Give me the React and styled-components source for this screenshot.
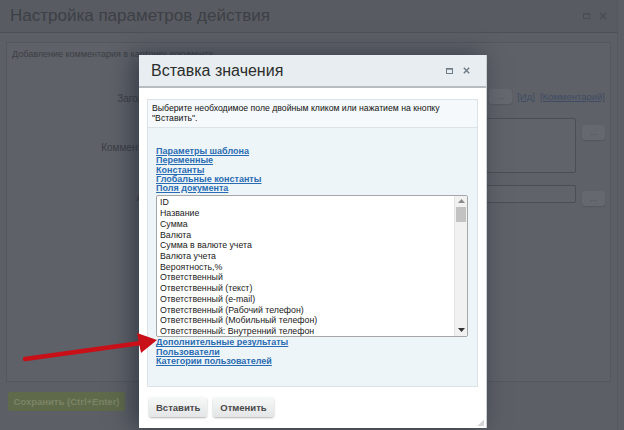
import React from "react";
import styled, { createGlobalStyle } from "styled-components";

const GlobalStyle = createGlobalStyle`
  html, body {
    margin: 0;
    padding: 0;
    background: #5b5e64;
  }
  body {
    font-family: "Liberation Sans", Arial, sans-serif;
  }
`;

const fields = [
  "ID",
  "Название",
  "Сумма",
  "Валюта",
  "Сумма в валюте учета",
  "Валюта учета",
  "Вероятность,%",
  "Ответственный",
  "Ответственный (текст)",
  "Ответственный (e-mail)",
  "Ответственный (Рабочий телефон)",
  "Ответственный (Мобильный телефон)",
  "Ответственный: Внутренний телефон",
  "Ответственный: Должность",
];

const topLinks = [
  "Параметры шаблона",
  "Переменные",
  "Константы",
  "Глобальные константы",
  "Поля документа",
];

const bottomLinks = [
  "Дополнительные результаты",
  "Пользователи",
  "Категории пользователей",
];

const Page = styled.div`
  position: relative;
  width: 624px;
  height: 430px;
  overflow: hidden;
  background: #5b5e64;
  display: flex;
  flex-direction: column;
`;

/* ---------- dimmed dialog behind ---------- */

const BgDialog = styled.div`
  flex: 1;
  display: flex;
  flex-direction: column;
  margin-right: 6px;
  background: #5c5f65;
  border-right: 1px solid #55585e;
`;

const BgHeader = styled.div`
  height: 32px;
  display: flex;
  align-items: center;
  padding: 0 10px;
  border-bottom: 1px solid #4d5056;
  background: #585b61;
`;

const BgTitle = styled.div`
  flex: 1;
  font-size: 17px;
  color: #3d4046;
`;

const BgIcons = styled.div`
  display: flex;
  gap: 9px;
  align-items: center;
`;

const BgBody = styled.div`
  flex: 1;
  padding: 9px 6px 8px 6px;
  display: flex;
  flex-direction: column;
`;

const BgPanel = styled.div`
  height: 340px;
  border: 1px solid #54575d;
  background: #5e6167;
  padding: 6px 5px;
  box-sizing: border-box;
`;

const BgCaption = styled.div`
  font-size: 9px;
  color: #3c3f45;
  margin-bottom: 30px;
`;

const BgRow = styled.div`
  display: flex;
  align-items: flex-start;
  gap: 6px;
  margin-bottom: ${(p) => p.$gap || 10}px;
`;

const BgLabel = styled.div`
  width: 155px;
  flex: none;
  font-size: 10px;
  color: #3c3f45;
  text-align: right;
  padding-top: ${(p) => p.$top || 4}px;
`;

const BgField = styled.div`
  width: ${(p) => p.$w}px;
  height: ${(p) => p.$h}px;
  margin-left: 2px;
  border: 1px solid #4b4e54;
  border-radius: 2px;
  background: #606369;
  box-sizing: border-box;
`;

const BgSide = styled.div`
  display: flex;
  align-items: center;
  gap: 5px;
  padding-top: ${(p) => p.$top || 0}px;
`;

const BgDots = styled.div`
  width: 23px;
  height: 15px;
  border-radius: 3px;
  background: #65686e;
  color: #4a4d53;
  font-size: 8px;
  display: flex;
  align-items: center;
  justify-content: center;
  box-shadow: 0 1px 1px #55585e;
`;

const BgLink = styled.span`
  font-size: 9.5px;
  color: #3f4b63;
  text-decoration: underline;
`;

const BgFooter = styled.div`
  height: 40px;
  display: flex;
  align-items: flex-start;
  padding: 2px 8px;
`;

const BgSave = styled.div`
  width: 117px;
  height: 19px;
  border-radius: 2px;
  background: #5f6a4b;
  color: #7b8465;
  font-size: 9.5px;
  font-weight: bold;
  display: flex;
  align-items: center;
  justify-content: center;
`;

const BottomStrip = styled.div`
  height: 7px;
  background: #3e4147;
`;

/* ---------- insert value dialog ---------- */

const Modal = styled.div`
  position: absolute;
  left: 139px;
  top: 55px;
  width: 348px;
  height: 373px;
  background: #ffffff;
  box-shadow: -6px 0 22px rgba(20, 30, 45, 0.55);
  display: flex;
  flex-direction: column;
  border-right: 1px solid #c9cfd3;
  box-sizing: border-box;
`;

const ModalHeader = styled.div`
  height: 33px;
  flex: none;
  display: flex;
  align-items: center;
  padding: 0 12px;
  background: #e7edf0;
  border-bottom: 2px solid #b5bdc3;
  box-sizing: border-box;
`;

const ModalTitle = styled.div`
  flex: 1;
  font-size: 16px;
  color: #2d2d2d;
  padding-top: 1px;
`;

const HeaderIcons = styled.div`
  display: flex;
  align-items: center;
  gap: 10px;
  margin-right: 4px;
`;

const ModalBody = styled.div`
  flex: 1;
  padding: 11px 8px 0 8px;
  display: flex;
  flex-direction: column;
`;

const ContentBox = styled.div`
  height: 288px;
  border: 1px solid #dbe3e8;
  display: flex;
  flex-direction: column;
  box-sizing: border-box;
`;

const Hint = styled.div`
  background: #f6f9fb;
  border-bottom: 1px solid #dce4e9;
  padding: 3px 4px 4px 4px;
  font-size: 8.7px;
  line-height: 10px;
  color: #111;
`;

const Fields = styled.div`
  flex: 1;
  background: #eef5f9;
  padding: 19px 9px 0 8px;
`;

const LinkList = styled.div`
  display: flex;
  flex-direction: column;
`;

const FieldLink = styled.a`
  font-size: 9px;
  line-height: 9.3px;
  font-weight: bold;
  color: #2a6cb3;
  text-decoration: underline;
  cursor: pointer;
`;

const ListBox = styled.div`
  height: 142px;
  margin: 2px 0 1px 0;
  background: #fff;
  border: 1px solid #a6a6a6;
  border-radius: 2px;
  display: flex;
  overflow: hidden;
  box-sizing: border-box;
`;

const Options = styled.div`
  flex: 1;
  overflow: hidden;
  padding: 1px 3px;
`;

const Option = styled.div`
  font-size: 8.8px;
  line-height: 10.7px;
  color: #1a1a1a;
  white-space: nowrap;
`;

const Scrollbar = styled.div`
  width: 13px;
  flex: none;
  background: #f1f1f1;
  border-left: 1px solid #e4e4e4;
  display: flex;
  flex-direction: column;
  align-items: center;
  padding: 3px 0 4px 0;
  box-sizing: border-box;
`;

const Thumb = styled.div`
  width: 10px;
  height: 15px;
  margin-top: 4px;
  background: #c2c2c2;
`;

const Spacer = styled.div`
  flex: 1;
`;

const Footer = styled.div`
  display: flex;
  gap: 6px;
  padding: 10px 2px 0 2px;
`;

const Button = styled.button`
  height: 20px;
  padding: 0 7px;
  border: none;
  border-radius: 3px;
  background: linear-gradient(#f7f8f8, #e3e5e6);
  box-shadow: 0 1px 2px rgba(0, 0, 0, 0.3);
  font-family: "Liberation Sans", Arial, sans-serif;
  font-size: 9.5px;
  font-weight: bold;
  color: #4a4a4a;
`;

const Grip = styled.div`
  position: absolute;
  right: 2px;
  bottom: 2px;
  width: 7px;
  height: 7px;
  background: linear-gradient(135deg, transparent 50%, #d2d6d9 50%);
`;

const Arrow = styled.svg`
  position: absolute;
  left: 0;
  top: 0;
  pointer-events: none;
`;

const SquareIcon = ({ color, size = 7 }) => (
  <svg width={size} height={size - 1} viewBox="0 0 7 6">
    <rect x="0.5" y="0.5" width="6" height="5" fill="none" stroke={color} strokeWidth="1" />
    <line x1="0.5" y1="1.2" x2="6.5" y2="1.2" stroke={color} strokeWidth="1" />
  </svg>
);

const CloseIcon = ({ color, size = 7 }) => (
  <svg width={size} height={size} viewBox="0 0 7 7">
    <path d="M0.8 0.8 L6.2 6.2 M6.2 0.8 L0.8 6.2" stroke={color} strokeWidth="1.4" />
  </svg>
);

const App = () => {
  return (
    <>
      <GlobalStyle />
      <Page>
        <BgDialog>
          <BgHeader>
            <BgTitle>Настройка параметров действия</BgTitle>
            <BgIcons>
              <SquareIcon color="#4a4d53" />
              <CloseIcon color="#4a4d53" size={8} />
            </BgIcons>
          </BgHeader>
          <BgBody>
            <BgPanel>
              <BgCaption>Добавление комментария в карточку документа</BgCaption>
              <BgRow $gap={12}>
                <BgLabel>Заголовок:</BgLabel>
                <BgField $w={312} $h={17} />
                <BgSide>
                  <BgDots>...</BgDots>
                  <BgLink>[Ид]</BgLink>
                  <BgLink>[Комментарий]</BgLink>
                </BgSide>
              </BgRow>
              <BgRow $gap={12}>
                <BgLabel $top={24}>Комментарий:</BgLabel>
                <BgField $w={402} $h={55} />
                <BgSide $top={7}>
                  <BgDots>...</BgDots>
                </BgSide>
              </BgRow>
              <BgRow>
                <BgLabel $top={7}>Автор:</BgLabel>
                <BgField $w={402} $h={18} />
                <BgSide $top={6}>
                  <BgDots>...</BgDots>
                </BgSide>
              </BgRow>
            </BgPanel>
          </BgBody>
          <BgFooter>
            <BgSave>Сохранить (Ctrl+Enter)</BgSave>
          </BgFooter>
        </BgDialog>
        <BottomStrip />

        <Modal>
          <ModalHeader>
            <ModalTitle>Вставка значения</ModalTitle>
            <HeaderIcons>
              <SquareIcon color="#6f7b85" />
              <CloseIcon color="#6f7b85" />
            </HeaderIcons>
          </ModalHeader>
          <ModalBody>
            <ContentBox>
              <Hint>
                Выберите необходимое поле двойным кликом или нажатием на кнопку
                <br />
                "Вставить".
              </Hint>
              <Fields>
                <LinkList>
                  {topLinks.map((l) => (
                    <FieldLink key={l}>{l}</FieldLink>
                  ))}
                </LinkList>
                <ListBox>
                  <Options>
                    {fields.map((f) => (
                      <Option key={f}>{f}</Option>
                    ))}
                  </Options>
                  <Scrollbar>
                    <svg width="7" height="4" viewBox="0 0 7 4">
                      <path d="M0 4 L3.5 0 L7 4 Z" fill="#8a8a8a" />
                    </svg>
                    <Thumb />
                    <Spacer />
                    <svg width="7" height="4" viewBox="0 0 7 4">
                      <path d="M0 0 L7 0 L3.5 4 Z" fill="#333" />
                    </svg>
                  </Scrollbar>
                </ListBox>
                <LinkList>
                  {bottomLinks.map((l) => (
                    <FieldLink key={l}>{l}</FieldLink>
                  ))}
                </LinkList>
              </Fields>
            </ContentBox>
            <Footer>
              <Button>Вставить</Button>
              <Button>Отменить</Button>
            </Footer>
          </ModalBody>
          <Grip />
        </Modal>

        <Arrow width="624" height="430" viewBox="0 0 624 430">
          <path d="M25 359 L141 343" stroke="#c90f17" strokeWidth="4.5" strokeLinecap="round" />
          <polygon points="137,333 157,340 141,353" fill="#c90f17" />
        </Arrow>
      </Page>
    </>
  );
};

export default App;
